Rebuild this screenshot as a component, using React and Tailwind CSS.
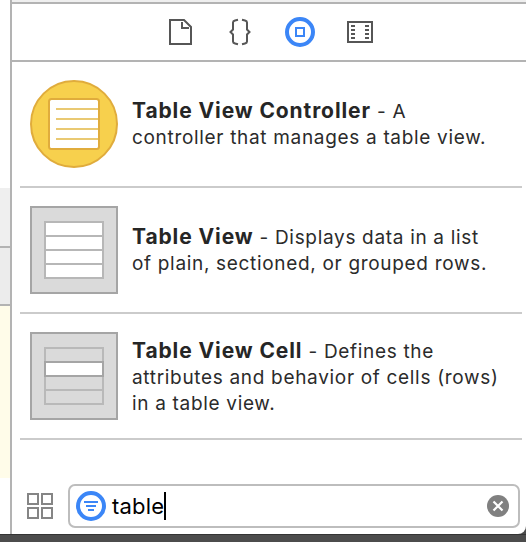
import React from "react";

function FileIcon() {
  return (
    <svg className="size-[30px]" viewBox="0 0 30 30" fill="none" stroke="#565656" strokeWidth="2">
      <path d="M5 3H19L26 10V27H5Z" />
      <path d="M17 5V11H24" />
    </svg>
  );
}

function BracesIcon() {
  return (
    <svg className="size-[30px]" viewBox="0 0 30 30" fill="none" stroke="#565656" strokeWidth="2">
      <path d="M13 2.8L10 3.5Q8 4 8 5.5V12.5L5.5 15L8 17.5V24.5Q8 26 10 26.5L13 27.2" />
      <path d="M17 2.8L20 3.5Q22 4 22 5.5V12.5L24.5 15L22 17.5V24.5Q22 26 20 26.5L17 27.2" />
    </svg>
  );
}

function ObjectIcon() {
  return (
    <svg className="size-[30px]" viewBox="0 0 30 30" fill="none" stroke="#3b86f7">
      <circle cx="15" cy="15" r="13" strokeWidth="4" />
      <rect x="11" y="11" width="8" height="8" strokeWidth="2" />
    </svg>
  );
}

function FilmIcon() {
  return (
    <svg className="size-[30px]" viewBox="0 0 30 30" fill="none" stroke="#565656" strokeWidth="2">
      <rect x="3" y="5" width="24" height="20" />
      <path d="M6 9H10M6 13H10M6 17H10M6 21H10M20 9H24M20 13H24M20 17H24M20 21H24" />
    </svg>
  );
}

function ControllerArt() {
  return (
    <svg className="size-[88px] shrink-0" viewBox="0 0 88 88">
      <circle cx="44" cy="44" r="43" fill="#f7d04d" stroke="#e0ac3c" strokeWidth="2" />
      <rect x="19" y="19" width="50" height="50" rx="2.5" fill="#fff" stroke="#e0ac3c" strokeWidth="2" />
      <path d="M26 29H68M26 39H68M26 49H68M26 59H68" stroke="#e9c973" strokeWidth="2" />
    </svg>
  );
}

function TableArt() {
  return (
    <svg className="size-[88px] shrink-0" viewBox="0 0 88 88" strokeWidth="2">
      <rect x="1" y="1" width="86" height="86" fill="#dadada" stroke="#a5a5a5" />
      <rect x="15" y="16" width="58" height="56" fill="#fff" stroke="#b7b7b7" />
      <path d="M15 30H73M15 44H73M15 58H73" stroke="#b7b7b7" />
    </svg>
  );
}

function CellArt() {
  return (
    <svg className="size-[88px] shrink-0" viewBox="0 0 88 88" strokeWidth="2">
      <rect x="1" y="1" width="86" height="86" fill="#dadada" stroke="#a5a5a5" />
      <rect x="15" y="16" width="58" height="56" fill="none" stroke="#b9b9b9" />
      <path d="M15 58H73" stroke="#b9b9b9" />
      <rect x="15" y="30" width="58" height="14" fill="#fff" stroke="#a5a5a5" />
    </svg>
  );
}

function Item({ art, title, intro, lines }) {
  return (
    <div className="ml-2 mr-1 flex h-[126px] items-center gap-[14px] border-b-2 border-[#cbcbcb] pl-[10px]">
      {art}
      <div
        className={`whitespace-nowrap text-[19px] leading-[26px] tracking-[0.68px] text-[#2b2b2b] ${
          lines.length > 1 ? "pt-[3px]" : "pt-px"
        }`}
      >
        <div className="flex h-[27px] items-baseline">
          <span className="text-[21px] font-bold leading-[26px] tracking-[0.9px] text-[#262626]">{title}</span>
          <span className="ml-[6px]">{intro}</span>
        </div>
        {lines.map((line) => (
          <div key={line} className="h-[26px]">{line}</div>
        ))}
      </div>
    </div>
  );
}

export default function App() {
  return (
    <div className="flex h-[542px] w-[526px] flex-col overflow-hidden bg-[#4c4c4c] font-['Inter',sans-serif]">
      <div className="flex h-[534px] overflow-hidden rounded-br-[8px] bg-white">
        <div className="flex w-[10px] shrink-0 flex-col">
          <div className="h-[188px]" />
          <div className="h-[60px] border-b-2 border-[#b3b3b3] bg-[#efefef]" />
          <div className="h-[58px] border-b-2 border-[#b3b3b3] bg-[#ececec]" />
          <div className="h-[172px] bg-[#fffce9]" />
        </div>
        <div className="flex min-w-0 flex-1 flex-col border-l-2 border-[#b3b3b3]">
          <div className="h-1 shrink-0 border-b-2 border-[#b3b3b3] bg-[#efefef]" />
          <div className="flex h-[58px] shrink-0 items-center justify-center gap-[30px] border-b-2 border-[#b3b3b3] pl-[2px]">
            <FileIcon />
            <BracesIcon />
            <ObjectIcon />
            <FilmIcon />
          </div>
          <Item art={<ControllerArt />} title="Table View Controller" intro="- A" lines={["controller that manages a table view."]} />
          <Item art={<TableArt />} title="Table View" intro="- Displays data in a list" lines={["of plain, sectioned, or grouped rows."]} />
          <Item
            art={<CellArt />}
            title="Table View Cell"
            intro="- Defines the"
            lines={["attributes and behavior of cells (rows)", "in a table view."]}
          />
          <div className="mt-[44px] flex h-11 items-center pl-[15px] pr-[6px]">
            <svg className="size-[26px] shrink-0" viewBox="0 0 26 26" fill="none" stroke="#858585" strokeWidth="2">
              <path d="M1 1H11V11H1ZM15 1H25V11H15ZM1 15H11V25H1ZM15 15H25V25H15Z" />
            </svg>
            <div className="ml-[15px] flex h-11 flex-1 items-center rounded-[7px] border-2 border-[#bdbdbd] pl-[6px] pr-[9px]">
              <svg className="size-[30px] shrink-0" viewBox="0 0 30 30" fill="none" stroke="#3b86f7">
                <circle cx="15" cy="15" r="13" strokeWidth="4" />
                <path d="M8 11H22M10 15H20M12 19H18" strokeWidth="2" />
              </svg>
              <span className="ml-[6px] text-[22px] leading-7 tracking-[0.2px] text-black">table</span>
              <span className="h-7 w-[2px] bg-black" />
              <svg className="ml-auto size-[22px]" viewBox="0 0 22 22">
                <circle cx="11" cy="11" r="11" fill="#808080" />
                <path d="M6.5 6.5L15.5 15.5M15.5 6.5L6.5 15.5" stroke="#fff" strokeWidth="2.2" />
              </svg>
            </div>
          </div>
        </div>
      </div>
      <div className="h-2 border-t border-[#343434]" />
    </div>
  );
}
